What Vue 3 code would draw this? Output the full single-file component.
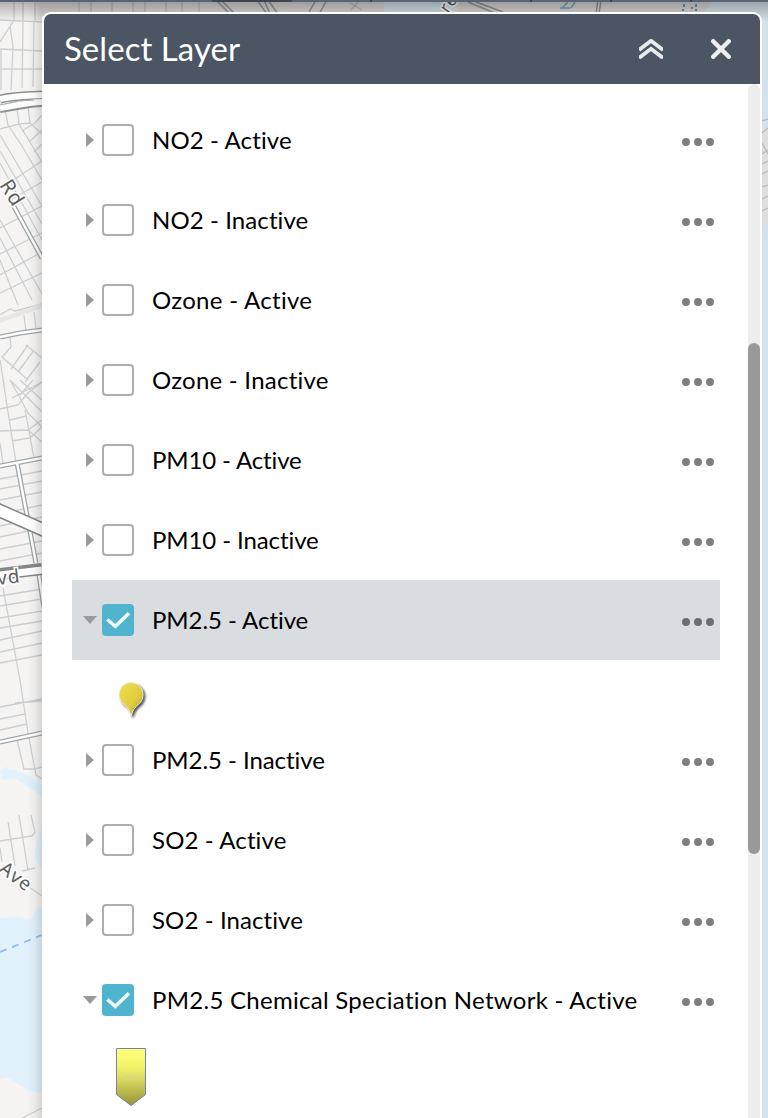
<script setup>
const layers = [
  { name: 'NO2 - Active', spacing: 0.12 },
  { name: 'NO2 - Inactive', spacing: 0.09 },
  { name: 'Ozone - Active', spacing: 0.3 },
  { name: 'Ozone - Inactive', spacing: 0.24 },
  { name: 'PM10 - Active', spacing: -0.14 },
  { name: 'PM10 - Inactive', spacing: -0.1 },
  { name: 'PM2.5 - Active', spacing: -0.06, checked: true, selected: true, symbol: 'pin' },
  { name: 'PM2.5 - Inactive', spacing: -0.06 },
  { name: 'SO2 - Active', spacing: 0.12 },
  { name: 'SO2 - Inactive', spacing: 0.09 },
  { name: 'PM2.5 Chemical Speciation Network - Active', spacing: 0.28, checked: true, symbol: 'shield' },
]
</script>

<template>
  <main class="app">
    <svg class="map" width="768" height="1118" viewBox="0 0 768 1118" aria-hidden="true">
      <defs>
        <linearGradient id="edge" x1="0" x2="1" y1="0" y2="0">
          <stop offset="0" stop-color="#000" stop-opacity="0" />
          <stop offset=".5" stop-color="#000" stop-opacity=".03" />
          <stop offset="1" stop-color="#000" stop-opacity=".13" />
        </linearGradient>
        <linearGradient id="topShade" x1="0" x2="0" y1="0" y2="1">
          <stop offset="0" stop-color="#000" stop-opacity=".3" />
          <stop offset="1" stop-color="#000" stop-opacity="0" />
        </linearGradient>
      </defs>
      <rect width="768" height="1118" fill="#f5f4f3" />
      <rect x="42" width="726" height="16" fill="#dad8d6" />
      <path d="M385 0H450L462 16H383ZM755 0H768V1118H755ZM715 0H768V16H700Z" fill="#d4e2ec" />
      <path d="M768 123 762 130V218L768 231Z" fill="#dfdedd" />
      <g fill="#e1f2fd">
        <path d="M0 770 9 766 8 769 16 770 28 775 42 785V796L28 787 15 778 2 780Z" />
        <path d="M42 828 36 843 35 859 42 869Z" />
        <path d="M0 918 17 917 31 920 38 907 42 910V1094L27 1090 7 1077 0 1079Z" />
      </g>
      <g fill="none" stroke="#cccfd1" stroke-width="1.3">
        <path d="M0 20 42 22M0 49 42 51M0 69H42M0 42 14 20V0M10 26 13 47 11 90M1 50V90M23 22 22 88M34 22 33 87M23 0V22M35 0V22" />
        <path d="M5 109 8 125 22 146 42 180M17 108 19 124 42 162M28 107 30 123M0 129 19 124 30 123 42 134M22 131 35 123 42 115M29 142 42 130M34 152 42 144M0 135 42 206M0 151 42 224M0 163 42 240" />
        <path d="M12 181 42 161M7 202 42 182M0 228 42 206M0 254 42 233M0 275 42 252M0 220 42 294M0 238 32 300M0 260 18 305M0 315 10 309 15 311 42 304M0 293 42 273M24 315 26 332M34 312 36 328M10 337 11 347 2 357 28 380M26 345 42 358M28 345 11 369M34 350 18 372M40 362 25 382M0 360 4 385" />
        <path d="M3 380 16 463M10 380 20 398 28 413 42 427M10 380 42 412M20 380 42 400M42 382 12 398M33 380 20 395M0 409 18 405 28 393 42 382M0 431 28 430 42 420M10 420 26 416M12 441 30 438 42 427M25 410 34 458M28 430 42 442M0 443 3 463M0 479 42 471M0 489 42 481M0 500 42 492M0 514 42 505M0 526 42 517M0 537 42 528M0 549 42 541M0 561 42 553" />
        <path d="M0 596 42 589M0 606 42 599M0 618 42 611M0 628 42 621M0 640 42 631M0 652 42 643M0 663 42 655M3 588 20 680 28 733M0 707 42 699M15 703 42 701M0 719 25 714M0 730 27 724" />
        <path d="M17 740 24 769H35L42 767M29 738 36 775 42 779M0 841 32 836 35 832 31 815M8 822 15 866M19 815 28 871M22 871 35 868M0 848 2 862M29 887 42 896M22 1118 42 1108" />
      </g>
      <path d="M0 318 42 303V308L0 323Z" fill="#e9e7e6" />
      <g fill="none">
        <path d="M0 99C18 95 28 96 44 95" stroke="#8d9091" stroke-width="9" />
        <path d="M0 109C16 107 28 103 42 103" stroke="#8d9091" stroke-width="8" />
        <path d="M0 99C18 95 28 96 44 95M0 108C16 106 28 102 42 102" stroke="#fff" stroke-width="6" />
        <path d="M0 105 18 101 34 100" stroke="#a6aaac" stroke-width="1.2" />
        <path d="M12 203 42 258M0 337 20 333 42 330M0 466 42 458M17 463 36 563M39 575 44 608M0 742 42 733" stroke="#a2a6a8" stroke-width="5" />
        <path d="M12 203 42 258M0 337 20 333 42 330M0 466 42 458M17 463 36 563M39 575 44 608M0 742 42 733" stroke="#fff" stroke-width="2.4" />
        <path d="M-4 509 46 531" stroke="#858888" stroke-width="14" />
        <path d="M-4 509 46 531" stroke="#fff" stroke-width="11" />
        <path d="M0 574 42 569" stroke="#858888" stroke-width="12" />
        <path d="M0 575 42 570" stroke="#fff" stroke-width="7" />
      </g>
      <path d="M0 952 42 935" stroke="#8abcf8" stroke-width="1.7" stroke-dasharray="7 6" fill="none" />
      <g fill="none" stroke="#929496" stroke-width="1.5">
        <path d="M216 0 230 14M221 0 235 14M257 0 267 14M264 0 270 14M268 0 278 14M316 0 308 14M327 0 319 14M468 2 497 14M476 2 503 12M598 0 596 14M601 0 599 14" />
      </g>
      <g fill="none" stroke="#b9babb" stroke-width="1.2">
        <path d="M79 0V14M91 0V14M112 0V14M133 0V12H145V0M166 0V14M182 0V14M199 0V14M350 3 362 10M360 0 351 10" />
        <path d="M762 121 768 119M762 133 768 128M762 143 768 154M762 154 768 150M762 164 768 161M762 174 768 171M762 187 768 185M762 199 768 196M762 211 768 208" />
      </g>
      <path d="M560 8H570M562 8 568 2M571 8 575 2" stroke="#70a5c2" stroke-width="1.6" fill="none" />
      <path d="M683 4h2v3h-2ZM695 4h2v3h-2ZM691 7h2v2h-2ZM682 9h2v2h-2ZM695 9h2v2h-2Z" fill="#5f94b5" />
      <g class="map-text">
        <text transform="translate(-1 185) rotate(58)" font-size="20.500">Rd</text>
        <text transform="translate(-2 585) rotate(-7)" font-size="19">vd</text>
        <text transform="translate(-2 871) rotate(37)" font-size="19">Ave</text>
        <text transform="translate(448 14) rotate(-55)" font-size="17">re</text>
      </g>
      <rect x="26" width="16" height="1118" fill="url(#edge)" />
      <rect y="0" width="768" height="22" fill="url(#topShade)" />
      <rect width="768" height="2" fill="#596373" />
      <path d="M212 0H292V2H212ZM370 0H372V2H370ZM530 0H532V2H530ZM610 0H612V2H610ZM690 0H692V2H690Z" fill="#3e4350" />
    </svg>

    <section class="panel">
      <header class="header">
        <h1 class="title">Select Layer</h1>
        <svg class="collapse" width="24" height="20" viewBox="0 0 24 20">
          <path d="M0 11 12 1.800 24 11M0 19 12 9.800 24 19" fill="none" stroke="#e8eaec" stroke-width="3.800" />
        </svg>
        <svg class="close" width="20" height="20" viewBox="0 0 20 20">
          <path d="M2.200 2.200 17.800 17.800M17.800 2.200 2.200 17.800" fill="none" stroke="#eceef0" stroke-width="4.400" stroke-linecap="round" />
        </svg>
      </header>

      <div class="body">
        <div class="layers">
          <template v-for="layer in layers" :key="layer.name">
            <div class="row" :class="{ selected: layer.selected }">
              <svg class="arrow" width="14" height="14" viewBox="0 0 14 14">
                <path v-if="layer.checked" d="M0 3H14L7 11Z" fill="#9a9a9a" />
                <path v-else d="M3 0 11 7 3 14Z" fill="#9a9a9a" />
              </svg>
              <span class="box" :class="{ checked: layer.checked }">
                <svg v-if="layer.checked" width="32" height="32" viewBox="0 0 32 32">
                  <path d="M5.300 15.500 13.300 22.300 27 9.300" fill="none" stroke="#f0fafd" stroke-width="3.500" />
                </svg>
              </span>
              <span class="name" :style="{ letterSpacing: layer.spacing + 'px' }">{{ layer.name }}</span>
              <svg class="dots" width="32" height="8" viewBox="0 0 32 8">
                <circle cx="4" cy="4" r="4" /><circle cx="16" cy="4" r="4" /><circle cx="28" cy="4" r="4" />
              </svg>
            </div>
            <div v-if="layer.symbol === 'pin'" class="symbol">
              <svg width="36" height="40" viewBox="0 0 36 40">
                <defs>
                  <linearGradient id="pinFill" x1="0" y1="0" x2="1" y2="1">
                    <stop offset=".2" stop-color="#e8d94d" />
                    <stop offset=".6" stop-color="#dfcd3d" />
                    <stop offset="1" stop-color="#a8941f" />
                  </linearGradient>
                </defs>
                <path class="pin" d="M15 1.500C8 1.500 3 7 3 13.500C3 19 6.500 23 10 25Q13 28 15 34.500Q17 28 21 24.500C25 22 27 18 27 13.500C27 7 22 1.500 15 1.500Z" fill="url(#pinFill)" stroke="#eeeeea" stroke-width="1" />
              </svg>
            </div>
            <div v-if="layer.symbol === 'shield'" class="symbol shield">
              <svg width="32" height="60" viewBox="0 0 32 60">
                <defs>
                  <linearGradient id="shieldFill" x1="0" y1="0" x2="0" y2="1">
                    <stop offset="0" stop-color="#ffff7d" />
                    <stop offset=".3" stop-color="#f4f46a" />
                    <stop offset=".55" stop-color="#d8d75d" />
                    <stop offset="1" stop-color="#97933b" />
                  </linearGradient>
                </defs>
                <path d="M.5.500H29.500V46.500L15 57.500.5 46.500Z" fill="url(#shieldFill)" stroke="#7186a8" />
                <text x="8" y="32" class="csn" textLength="14">CSN</text>
              </svg>
            </div>
          </template>
        </div>
        <div class="track"><div class="thumb"></div></div>
      </div>
    </section>
  </main>
</template>

<style>
body { overflow: hidden; }
</style>

<style scoped>
.app {
  position: relative;
  box-sizing: border-box;
  width: 768px;
  height: 1118px;
  padding: 12px 6px 0 42px;
  overflow: hidden;
  font-family: Lato, "Open Sans", sans-serif;
}
.map { position: absolute; left: 0; top: 0; }
.map-text {
  font-family: "Noto Sans", sans-serif;
  fill: #5d5e5e;
  stroke: #fff;
  stroke-width: 3px;
  paint-order: stroke;
  letter-spacing: 1px;
}
.panel {
  position: relative;
  box-sizing: border-box;
  width: 720px;
  height: 1106px;
  padding: 2px 2px 0;
  background: #fff;
  border-radius: 9px 9px 0 0;
}
.header {
  display: flex;
  align-items: center;
  box-sizing: border-box;
  height: 70px;
  padding: 0 29px 0 20px;
  background: #4c5564;
  border-radius: 7px 7px 0 0;
}
.title {
  flex: 1;
  margin: 0;
  color: #fff;
  font-size: 33px;
  font-weight: 400;
  line-height: 68px;
  height: 70px;
  letter-spacing: 0.05px;
}
.collapse { margin-right: 48px; }
.body { display: flex; justify-content: space-between; height: 1034px; }
.layers { width: 648px; padding: 16px 0 0 28px; }
.row { display: flex; align-items: center; height: 80px; padding: 0 6px 0 11px; box-sizing: border-box; }
.selected { background: #d9dde0; }
.arrow { margin-right: 5px; }
.box {
  box-sizing: border-box;
  width: 32px;
  height: 32px;
  margin-right: 18px;
  border: 2px solid #afafaf;
  border-radius: 4px;
  background: #fff;
}
.box.checked { border: 0; background: #51b4ce; }
.box svg { display: block; }
.name { flex: 1; font-size: 24px; line-height: 32px; color: #000; white-space: nowrap; }
.dots { margin-top: 4px; fill: #808080; }
.selected .dots { fill: #6d6e70; }
.symbol { box-sizing: border-box; height: 60px; padding: 21px 0 0 44px; }
.symbol svg { display: block; }
.shield { height: 78px; padding-top: 8px; }
.pin { filter: drop-shadow(2px 2px 1px rgb(0 0 0 / 65%)); }
.csn { font: 7px "Open Sans", sans-serif; fill: #d2d0b4; }
.track { width: 12px; height: 1050px; border-radius: 6px 6px 0 0; background: #ededed; padding-top: 259px; box-sizing: border-box; }
.thumb { height: 511px; border-radius: 6px; background: #999; }
</style>
